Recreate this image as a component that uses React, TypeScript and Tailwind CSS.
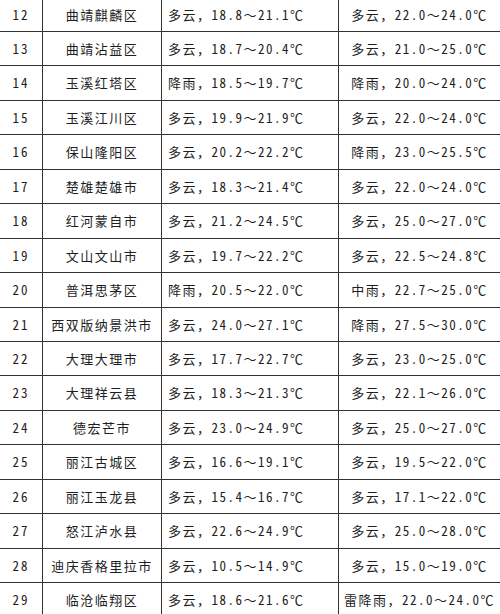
const rows: [string, string, string, string][] = [
  ['12', '曲靖麒麟区', '多云，18.8～21.1℃', '多云，22.0～24.0℃'],
  ['13', '曲靖沾益区', '多云，18.7～20.4℃', '多云，21.0～25.0℃'],
  ['14', '玉溪红塔区', '降雨，18.5～19.7℃', '降雨，20.0～24.0℃'],
  ['15', '玉溪江川区', '多云，19.9～21.9℃', '多云，22.0～24.0℃'],
  ['16', '保山隆阳区', '多云，20.2～22.2℃', '降雨，23.0～25.5℃'],
  ['17', '楚雄楚雄市', '多云，18.3～21.4℃', '多云，22.0～24.0℃'],
  ['18', '红河蒙自市', '多云，21.2～24.5℃', '多云，25.0～27.0℃'],
  ['19', '文山文山市', '多云，19.7～22.2℃', '多云，22.5～24.8℃'],
  ['20', '普洱思茅区', '降雨，20.5～22.0℃', '中雨，22.7～25.0℃'],
  ['21', '西双版纳景洪市', '多云，24.0～27.1℃', '降雨，27.5～30.0℃'],
  ['22', '大理大理市', '多云，17.7～22.7℃', '多云，23.0～25.0℃'],
  ['23', '大理祥云县', '多云，18.3～21.3℃', '多云，22.1～26.0℃'],
  ['24', '德宏芒市', '多云，23.0～24.9℃', '多云，25.0～27.0℃'],
  ['25', '丽江古城区', '多云，16.6～19.1℃', '多云，19.5～22.0℃'],
  ['26', '丽江玉龙县', '多云，15.4～16.7℃', '多云，17.1～22.0℃'],
  ['27', '怒江泸水县', '多云，22.6～24.9℃', '多云，25.0～28.0℃'],
  ['28', '迪庆香格里拉市', '多云，10.5～14.9℃', '多云，15.0～19.0℃'],
  ['29', '临沧临翔区', '多云，18.6～21.6℃', '雷降雨，22.0～24.0℃'],
];

// digits in the source are half-width, punctuation stays full-width
function Mixed({ text }: { text: string }) {
  return (
    <span>
      {text.split(/([0-9.]+)/).map((part, i) =>
        /^[0-9.]+$/.test(part) ? (
          <span key={i} className="[font-feature-settings:'hwid']">
            {part}
          </span>
        ) : (
          part
        ),
      )}
    </span>
  );
}

export default function App() {
  return (
    <div className="h-[614px] w-[500px] overflow-hidden bg-white">
      <div className="mt-[-2.4px] text-[13px] tracking-[1.5px] text-[#1e1e1e] [font-family:'Noto_Sans_CJK_SC',sans-serif]">
        {rows.map(([no, area, today, tomorrow]) => (
          <div key={no} className="grid h-[34.44px] grid-cols-[43px_119px_177px_161px] border-b border-[#333]">
            <div className="flex items-center justify-center border-r border-[#333] tracking-[2px]">
              <Mixed text={no} />
            </div>
            <div className="flex items-center justify-center border-r border-[#333]">{area}</div>
            <div className="flex items-center border-r border-[#333] pl-[6px]">
              <Mixed text={today} />
            </div>
            <div className="flex items-center justify-center">
              <Mixed text={tomorrow} />
            </div>
          </div>
        ))}
      </div>
    </div>
  );
}
